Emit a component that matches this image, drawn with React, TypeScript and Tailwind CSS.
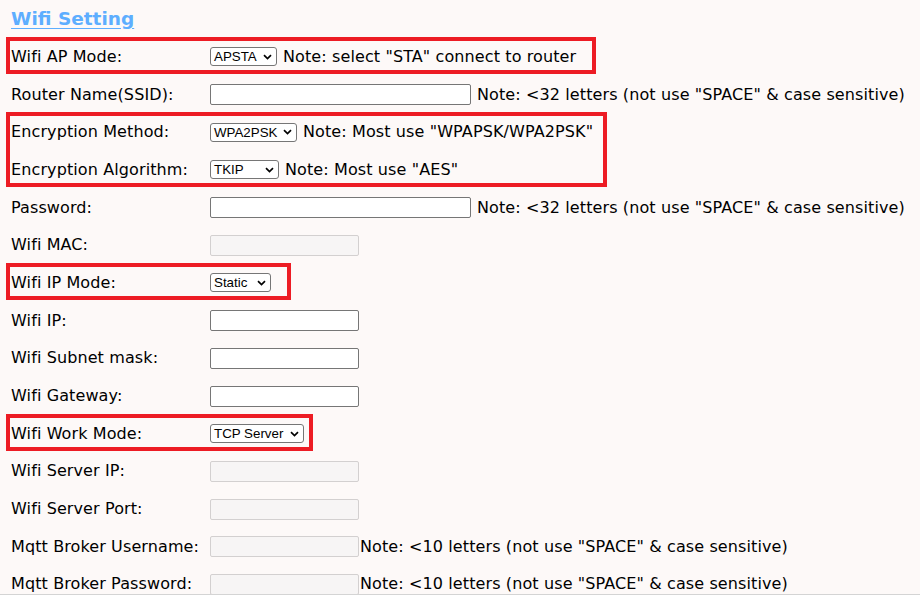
import React from "react";

type Field =
  | { kind: "select"; value: string; width: string }
  | { kind: "input"; width: string; disabled?: boolean };

interface RowData {
  label: string;
  field: Field;
  note?: string;
  tightNote?: boolean;
}

function Chevron() {
  return (
    <svg width="9" height="6" viewBox="0 0 9 6" className="shrink-0">
      <path d="M1 1.2l3.5 3.4L8 1.2" fill="none" stroke="#000" strokeWidth="1.7" />
    </svg>
  );
}

function FakeSelect({ value, width }: { value: string; width: string }) {
  return (
    <span
      className={`inline-flex h-[19px] items-center justify-between rounded-[3px] border border-[#767676] bg-white pl-[3px] pr-[4px] text-[13.33px] leading-none tracking-normal text-black ${width}`}
      style={{ fontFamily: '"Liberation Sans", Arial, sans-serif' }}
    >
      <span>{value}</span>
      <Chevron />
    </span>
  );
}

function FieldBox({ field }: { field: Field }) {
  if (field.kind === "select") return <FakeSelect value={field.value} width={field.width} />;
  return (
    <input
      disabled={field.disabled}
      className={`h-[21px] rounded-[2px] border ${
        field.disabled ? "border-[#d3d0d0] bg-[#f7f5f5]" : "border-[#767676] bg-white"
      } ${field.width}`}
    />
  );
}

function Row({ row, boxed, first, last }: { row: RowData; boxed?: boolean; first?: boolean; last?: boolean }) {
  return (
    <div
      className={`flex h-[37.7px] items-center ${boxed ? "pl-[1px]" : "pl-[5px]"} ${
        boxed && first ? "-mt-[3px]" : ""
      } ${boxed && last ? "-mb-[6px]" : ""}`}
    >
      <span className="w-[199px] shrink-0 whitespace-nowrap">{row.label}</span>
      <FieldBox field={row.field} />
      {row.note && (
        <span className={`whitespace-nowrap ${row.tightNote ? "ml-[1px]" : "ml-[6px]"}`}>{row.note}</span>
      )}
    </div>
  );
}

function Boxed({ rows, width }: { rows: RowData[]; width: string }) {
  return (
    <div className={`-mt-[1px] mb-[2px] border-4 border-[#ed1c24] ${width}`}>
      {rows.map((r, i) => (
        <Row key={r.label} row={r} boxed first={i === 0} last={i === rows.length - 1} />
      ))}
    </div>
  );
}

const note32 = 'Note: <32 letters (not use "SPACE" & case sensitive)';
const note10 = 'Note: <10 letters (not use "SPACE" & case sensitive)';

export default function App() {
  return (
    <div
      className="flex h-[595px] w-full flex-col overflow-hidden bg-[#fdf9f8] text-[16px] tracking-[0.11px] text-black"
      style={{ fontFamily: '"DejaVu Sans", Verdana, sans-serif' }}
    >
      <div className="min-h-0 flex-1 overflow-hidden pl-[6px]">
        <div className="flex h-[38px] items-start pl-[5px] pt-[5px]">
          <h3 className="text-[18.5px] font-bold tracking-normal text-[#5eaeff] underline underline-offset-[3px]">
            Wifi Setting
          </h3>
        </div>

        <Boxed
          width="w-[590px]"
          rows={[
            { label: "Wifi AP Mode:", field: { kind: "select", value: "APSTA", width: "w-[67px]" }, note: 'Note: select "STA" connect to router' },
          ]}
        />
        <Row row={{ label: "Router Name(SSID):", field: { kind: "input", width: "w-[261px]" }, note: note32 }} />
        <Boxed
          width="w-[601px]"
          rows={[
            { label: "Encryption Method:", field: { kind: "select", value: "WPA2PSK", width: "w-[87px]" }, note: 'Note: Most use "WPAPSK/WPA2PSK"' },
            { label: "Encryption Algorithm:", field: { kind: "select", value: "TKIP", width: "w-[69px]" }, note: 'Note: Most use "AES"' },
          ]}
        />
        <Row row={{ label: "Password:", field: { kind: "input", width: "w-[261px]" }, note: note32 }} />
        <Row row={{ label: "Wifi MAC:", field: { kind: "input", width: "w-[149px]", disabled: true } }} />
        <Boxed
          width="w-[285px]"
          rows={[{ label: "Wifi IP Mode:", field: { kind: "select", value: "Static", width: "w-[61px]" } }]}
        />
        <Row row={{ label: "Wifi IP:", field: { kind: "input", width: "w-[149px]" } }} />
        <Row row={{ label: "Wifi Subnet mask:", field: { kind: "input", width: "w-[149px]" } }} />
        <Row row={{ label: "Wifi Gateway:", field: { kind: "input", width: "w-[149px]" } }} />
        <Boxed
          width="w-[307px]"
          rows={[{ label: "Wifi Work Mode:", field: { kind: "select", value: "TCP Server", width: "w-[94px]" } }]}
        />
        <Row row={{ label: "Wifi Server IP:", field: { kind: "input", width: "w-[149px]", disabled: true } }} />
        <Row row={{ label: "Wifi Server Port:", field: { kind: "input", width: "w-[149px]", disabled: true } }} />
        <Row
          row={{ label: "Mqtt Broker Username:", field: { kind: "input", width: "w-[149px]", disabled: true }, note: note10, tightNote: true }}
        />
        <Row
          row={{ label: "Mqtt Broker Password:", field: { kind: "input", width: "w-[149px]", disabled: true }, note: note10, tightNote: true }}
        />
      </div>
      <div className="h-px shrink-0 bg-[#d4d4d4]" />
    </div>
  );
}
